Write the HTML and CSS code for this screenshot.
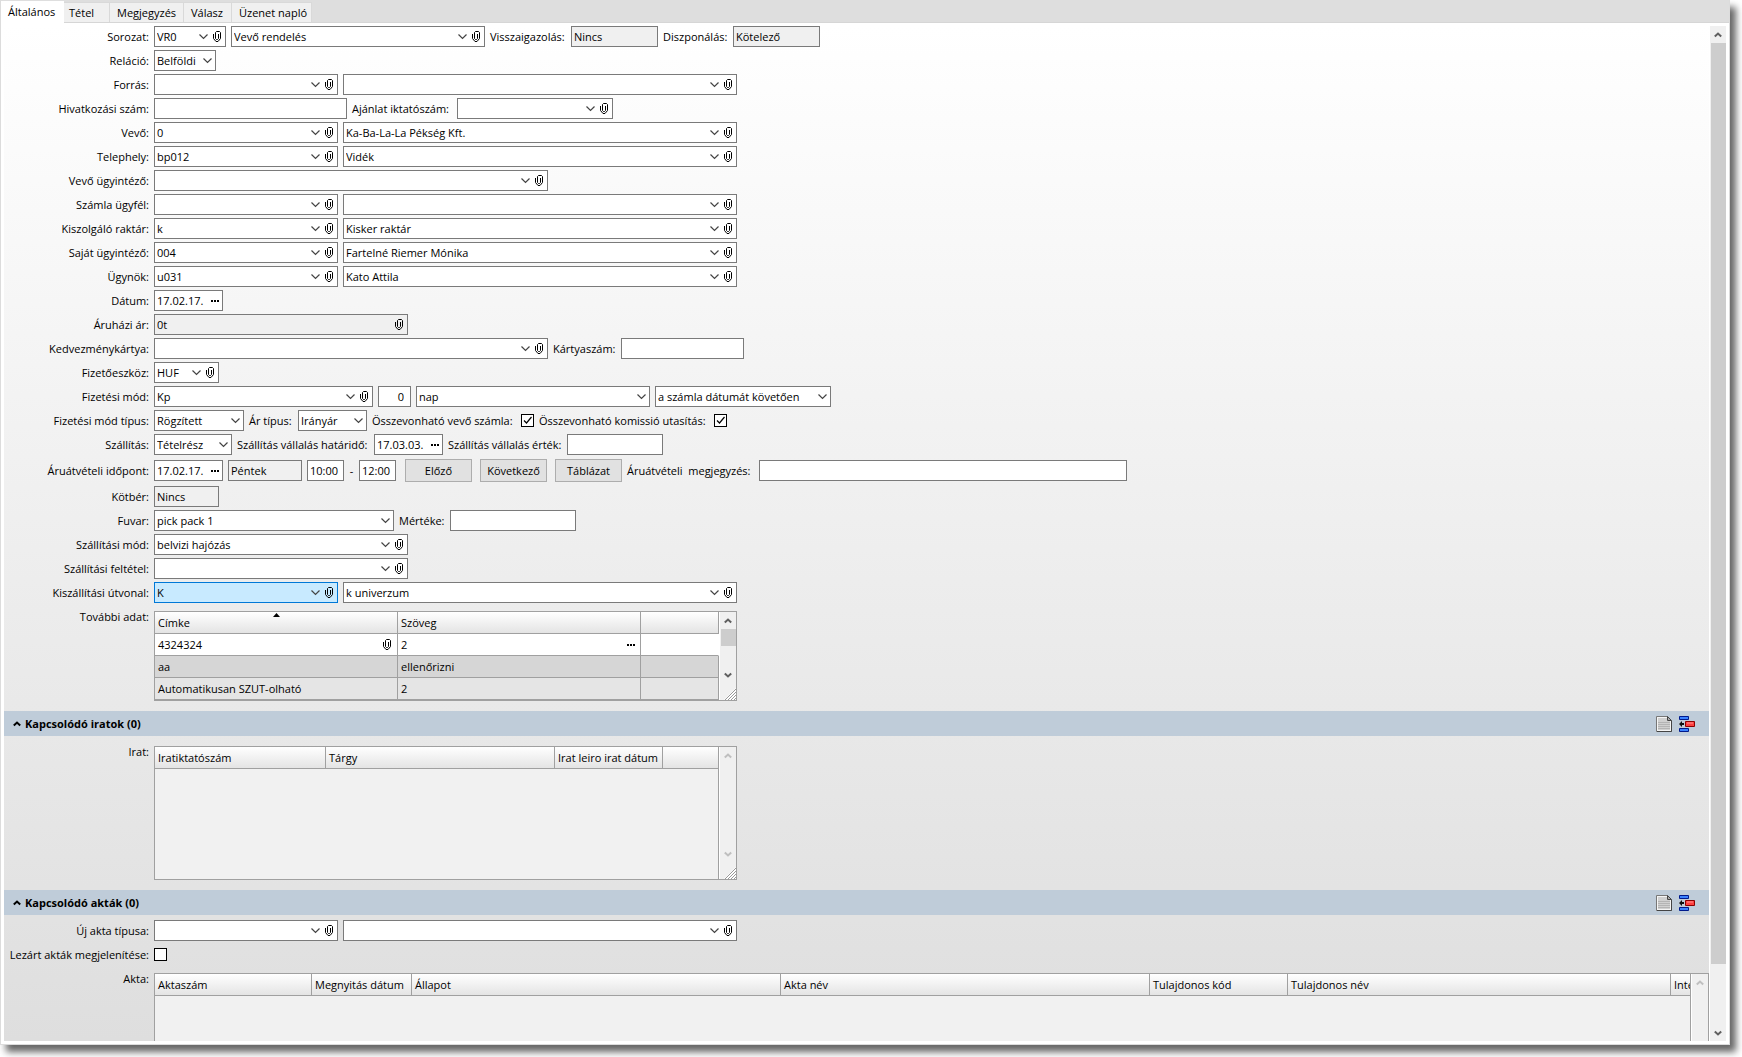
FILE: index.html
```html
<!DOCTYPE html>
<html lang="hu">
<head>
    <meta charset="UTF-8">
    <meta name="viewport" content="width=device-width, initial-scale=1.0">
    <title>Vevő rendelés</title>
    <link rel="stylesheet" href="styles.css">
</head>
<body>
    <svg class="symbols" aria-hidden="true">
        <symbol id="clip" viewBox="0 0 9 11">
            <path d="M.5 3v4.500l2.500 3h2l2.500-3v-6l-1-1h-3l-1 1v6l1 1h1l1-1V3" fill="none" stroke="#000"/>
        </symbol>
        <symbol id="dots" viewBox="0 0 8 2">
            <path d="M0 0h2v2H0zM3 0h2v2H3zM6 0h2v2H6z"/>
        </symbol>
        <symbol id="up" viewBox="0 0 8 6">
            <path d="M.8 4.500 4 1.500l3.200 3" fill="none" stroke="currentColor" stroke-width="2"/>
        </symbol>
        <symbol id="down" viewBox="0 0 8 6">
            <path d="M.8 1.500 4 4.500l3.200-3" fill="none" stroke="currentColor" stroke-width="2"/>
        </symbol>
        <symbol id="grip" viewBox="0 0 12 12">
            <path d="M0 12 12 0v12z" fill="#fff"/>
            <path d="M1 12 12 1M4 12l8-8M7 12l5-5M10 12l2-2" stroke="#999"/>
        </symbol>
        <symbol id="page" viewBox="0 0 16 16">
            <path d="M.5.5h11l4 4v11H.5z" fill="#f4f4f4" stroke="#777"/>
            <path d="M2 2h9v3h3v9H2z" fill="#d0d0d0"/>
            <path d="M2 6.500h12M2 8.500h12M2 10.500h12M2 12.500h12" stroke="#b4b4b4"/>
            <path d="M11.500.5v4h4z" fill="#aaa" stroke="#444"/>
            <path d="M15.500 5v10.500H1" fill="none" stroke="#444"/>
        </symbol>
        <symbol id="insert" viewBox="0 0 16 16">
            <path d="M.5.5h9v3h-9zM.5 12.500h9v3h-9z" fill="#3b82ff" stroke="#001a8c"/>
            <path d="M6.500 5.500h9v5h-9z" fill="#ff4040" stroke="#8c0000"/>
            <path d="M8 7h6" stroke="#ff9090"/>
            <path d="M0 8l3-3v2h2v2H3v2z" fill="#111"/>
        </symbol>
    </svg>

    <div class="window">
        <nav class="tabs">
            <button class="tab tab-general active">Általános</button>
            <button class="tab tab-item">Tétel</button>
            <button class="tab tab-note">Megjegyzés</button>
            <button class="tab tab-reply">Válasz</button>
            <button class="tab tab-log">Üzenet napló</button>
        </nav>

        <div class="pane">
            <form class="content">
                <div class="row">
                    <label class="name" for="sorozat">Sorozat:</label>
                    <div class="field w72"><select id="sorozat"><option>VR0</option></select><button type="button" class="icon"><svg class="clip"><use href="#clip"/></svg></button></div>
                    <div class="field w254"><select aria-label="Sorozat neve"><option>Vevő rendelés</option></select><button type="button" class="icon"><svg class="clip"><use href="#clip"/></svg></button></div>
                    <label class="w76" for="visszaig">Visszaigazolás:</label>
                    <div class="field readonly w87"><input id="visszaig" value="Nincs" readonly></div>
                    <label class="w65" for="diszp">Diszponálás:</label>
                    <div class="field readonly w87"><input id="diszp" value="Kötelező" readonly></div>
                </div>
                <div class="row">
                    <label class="name" for="relacio">Reláció:</label>
                    <div class="field w62"><select id="relacio"><option>Belföldi</option></select></div>
                </div>
                <div class="row">
                    <label class="name" for="forras">Forrás:</label>
                    <div class="field w184"><select id="forras"><option></option></select><button type="button" class="icon"><svg class="clip"><use href="#clip"/></svg></button></div>
                    <div class="field w394"><select aria-label="Forrás neve"><option></option></select><button type="button" class="icon"><svg class="clip"><use href="#clip"/></svg></button></div>
                </div>
                <div class="row">
                    <label class="name" for="hivszam">Hivatkozási szám:</label>
                    <div class="field w193"><input id="hivszam"></div>
                    <label class="w100" for="ajanlat">Ajánlat iktatószám:</label>
                    <div class="field w156"><select id="ajanlat"><option></option></select><button type="button" class="icon"><svg class="clip"><use href="#clip"/></svg></button></div>
                </div>
                <div class="row">
                    <label class="name" for="vevo">Vevő:</label>
                    <div class="field w184"><select id="vevo"><option>0</option></select><button type="button" class="icon"><svg class="clip"><use href="#clip"/></svg></button></div>
                    <div class="field w394"><select aria-label="Vevő neve"><option>Ka-Ba-La-La Pékség Kft.</option></select><button type="button" class="icon"><svg class="clip"><use href="#clip"/></svg></button></div>
                </div>
                <div class="row">
                    <label class="name" for="telephely">Telephely:</label>
                    <div class="field w184"><select id="telephely"><option>bp012</option></select><button type="button" class="icon"><svg class="clip"><use href="#clip"/></svg></button></div>
                    <div class="field w394"><select aria-label="Telephely neve"><option>Vidék</option></select><button type="button" class="icon"><svg class="clip"><use href="#clip"/></svg></button></div>
                </div>
                <div class="row">
                    <label class="name" for="vevougy">Vevő ügyintéző:</label>
                    <div class="field w394"><select id="vevougy"><option></option></select><button type="button" class="icon"><svg class="clip"><use href="#clip"/></svg></button></div>
                </div>
                <div class="row">
                    <label class="name" for="szamlaugy">Számla ügyfél:</label>
                    <div class="field w184"><select id="szamlaugy"><option></option></select><button type="button" class="icon"><svg class="clip"><use href="#clip"/></svg></button></div>
                    <div class="field w394"><select aria-label="Számla ügyfél neve"><option></option></select><button type="button" class="icon"><svg class="clip"><use href="#clip"/></svg></button></div>
                </div>
                <div class="row">
                    <label class="name" for="raktar">Kiszolgáló raktár:</label>
                    <div class="field w184"><select id="raktar"><option>k</option></select><button type="button" class="icon"><svg class="clip"><use href="#clip"/></svg></button></div>
                    <div class="field w394"><select aria-label="Raktár neve"><option>Kisker raktár</option></select><button type="button" class="icon"><svg class="clip"><use href="#clip"/></svg></button></div>
                </div>
                <div class="row">
                    <label class="name" for="sajatugy">Saját ügyintéző:</label>
                    <div class="field w184"><select id="sajatugy"><option>004</option></select><button type="button" class="icon"><svg class="clip"><use href="#clip"/></svg></button></div>
                    <div class="field w394"><select aria-label="Saját ügyintéző neve"><option>Fartelné Riemer Mónika</option></select><button type="button" class="icon"><svg class="clip"><use href="#clip"/></svg></button></div>
                </div>
                <div class="row">
                    <label class="name" for="ugynok">Ügynök:</label>
                    <div class="field w184"><select id="ugynok"><option>u031</option></select><button type="button" class="icon"><svg class="clip"><use href="#clip"/></svg></button></div>
                    <div class="field w394"><select aria-label="Ügynök neve"><option>Kato Attila</option></select><button type="button" class="icon"><svg class="clip"><use href="#clip"/></svg></button></div>
                </div>
                <div class="row">
                    <label class="name" for="datum">Dátum:</label>
                    <div class="field w69"><input id="datum" value="17.02.17."><button type="button" class="icon"><svg class="dots"><use href="#dots"/></svg></button></div>
                </div>
                <div class="row">
                    <label class="name" for="aruhazi">Áruházi ár:</label>
                    <div class="field readonly w254"><input id="aruhazi" value="0t" readonly><button type="button" class="icon"><svg class="clip"><use href="#clip"/></svg></button></div>
                </div>
                <div class="row">
                    <label class="name" for="kedvkartya">Kedvezménykártya:</label>
                    <div class="field w394"><select id="kedvkartya"><option></option></select><button type="button" class="icon"><svg class="clip"><use href="#clip"/></svg></button></div>
                    <label class="w63" for="kartyaszam">Kártyaszám:</label>
                    <div class="field w123"><input id="kartyaszam"></div>
                </div>
                <div class="row">
                    <label class="name" for="fizeszkoz">Fizetőeszköz:</label>
                    <div class="field w65"><select id="fizeszkoz"><option>HUF</option></select><button type="button" class="icon"><svg class="clip"><use href="#clip"/></svg></button></div>
                </div>
                <div class="row">
                    <label class="name" for="fizmod">Fizetési mód:</label>
                    <div class="field w219"><select id="fizmod"><option>Kp</option></select><button type="button" class="icon"><svg class="clip"><use href="#clip"/></svg></button></div>
                    <div class="field w33"><input class="number" aria-label="Napok száma" value="0"></div>
                    <div class="field w234"><select aria-label="Egység"><option>nap</option></select></div>
                    <div class="field w176"><select aria-label="Kezdete"><option>a számla dátumát követően</option></select></div>
                </div>
                <div class="row">
                    <label class="name" for="fiztipus">Fizetési mód típus:</label>
                    <div class="field w90"><select id="fiztipus"><option>Rögzített</option></select></div>
                    <label class="w44" for="artipus">Ár típus:</label>
                    <div class="field w69"><select id="artipus"><option>Irányár</option></select></div>
                    <label class="w144" for="vevoszamla">Összevonható vevő számla:</label>
                    <input type="checkbox" id="vevoszamla" checked>
                    <label class="w170" for="komissio">Összevonható komissió utasítás:</label>
                    <input type="checkbox" id="komissio" checked>
                </div>
                <div class="row">
                    <label class="name" for="szallitas">Szállítás:</label>
                    <div class="field w78"><select id="szallitas"><option>Tételrész</option></select></div>
                    <label class="w132" for="hatarido">Szállítás vállalás határidő:</label>
                    <div class="field w69"><input id="hatarido" value="17.03.03."><button type="button" class="icon"><svg class="dots"><use href="#dots"/></svg></button></div>
                    <label class="w114" for="ertek">Szállítás vállalás érték:</label>
                    <div class="field w96"><input id="ertek"></div>
                </div>
                <div class="row row-tall">
                    <label class="name" for="idopont">Áruátvételi időpont:</label>
                    <div class="field w69"><input id="idopont" value="17.02.17."><button type="button" class="icon"><svg class="dots"><use href="#dots"/></svg></button></div>
                    <div class="field readonly w74"><input aria-label="Nap" value="Péntek" readonly></div>
                    <div class="field w37"><input aria-label="Kezdés" value="10:00"></div>
                    <span class="dash">-</span>
                    <div class="field w37"><input aria-label="Vége" value="12:00"></div>
                    <div class="buttons">
                        <button type="button">Előző</button>
                        <button type="button">Következő</button>
                        <button type="button">Táblázat</button>
                    </div>
                    <label class="w127" for="megjegyzes">Áruátvételi &nbsp;megjegyzés:</label>
                    <div class="field w368"><input id="megjegyzes"></div>
                </div>
                <div class="row">
                    <label class="name" for="kotber">Kötbér:</label>
                    <div class="field readonly w65"><input id="kotber" value="Nincs" readonly></div>
                </div>
                <div class="row">
                    <label class="name" for="fuvar">Fuvar:</label>
                    <div class="field w240"><select id="fuvar"><option>pick pack 1</option></select></div>
                    <label class="w46" for="merteke">Mértéke:</label>
                    <div class="field w126"><input id="merteke"></div>
                </div>
                <div class="row">
                    <label class="name" for="szallmod">Szállítási mód:</label>
                    <div class="field w254"><select id="szallmod"><option>belvizi hajózás</option></select><button type="button" class="icon"><svg class="clip"><use href="#clip"/></svg></button></div>
                </div>
                <div class="row">
                    <label class="name" for="szallfelt">Szállítási feltétel:</label>
                    <div class="field w254"><select id="szallfelt"><option></option></select><button type="button" class="icon"><svg class="clip"><use href="#clip"/></svg></button></div>
                </div>
                <div class="row">
                    <label class="name" for="utvonal">Kiszállítási útvonal:</label>
                    <div class="field focused w184"><select id="utvonal"><option>K</option></select><button type="button" class="icon"><svg class="clip"><use href="#clip"/></svg></button></div>
                    <div class="field w394"><select aria-label="Útvonal neve"><option>k univerzum</option></select><button type="button" class="icon"><svg class="clip"><use href="#clip"/></svg></button></div>
                </div>
                <div class="row row-grid">
                    <span class="name" id="tovabbi">További adat:</span>
                    <div class="grid w583">
                        <table class="data" aria-labelledby="tovabbi">
                            <thead>
                                <tr><th class="w243 sorted">Címke</th><th class="w243">Szöveg</th><th></th></tr>
                            </thead>
                            <tbody>
                                <tr class="editing">
                                    <td><div class="cell">4324324<svg class="clip"><use href="#clip"/></svg></div></td>
                                    <td><div class="cell">2<svg class="dots"><use href="#dots"/></svg></div></td>
                                    <td></td>
                                </tr>
                                <tr class="dark"><td>aa</td><td>ellenőrizni</td><td></td></tr>
                                <tr><td>Automatikusan SZUT-olható</td><td>2</td><td></td></tr>
                            </tbody>
                        </table>
                        <div class="scroll">
                            <svg class="arrow"><use href="#up"/></svg>
                            <div class="thumb thumb-small"></div>
                            <svg class="arrow arrow-end"><use href="#down"/></svg>
                            <svg class="grip"><use href="#grip"/></svg>
                        </div>
                    </div>
                </div>

                <div class="section">
                    <button type="button" class="fold"><svg class="arrow"><use href="#up"/></svg>Kapcsolódó iratok (0)</button>
                    <button type="button" class="tool" aria-label="Új irat"><svg><use href="#page"/></svg></button>
                    <button type="button" class="tool" aria-label="Irat csatolása"><svg><use href="#insert"/></svg></button>
                </div>
                <div class="row row-grid">
                    <span class="name" id="irat">Irat:</span>
                    <div class="grid grid-docs w583">
                        <table class="data" aria-labelledby="irat">
                            <thead>
                                <tr><th class="w171">Iratiktatószám</th><th class="w229">Tárgy</th><th class="w108">Irat leiro irat dátum</th><th></th></tr>
                            </thead>
                        </table>
                        <div class="scroll disabled">
                            <svg class="arrow"><use href="#up"/></svg>
                            <svg class="arrow arrow-end"><use href="#down"/></svg>
                            <svg class="grip"><use href="#grip"/></svg>
                        </div>
                    </div>
                </div>

                <div class="section">
                    <button type="button" class="fold"><svg class="arrow"><use href="#up"/></svg>Kapcsolódó akták (0)</button>
                    <button type="button" class="tool" aria-label="Új akta"><svg><use href="#page"/></svg></button>
                    <button type="button" class="tool" aria-label="Akta csatolása"><svg><use href="#insert"/></svg></button>
                </div>
                <div class="row">
                    <label class="name" for="aktatipus">Új akta típusa:</label>
                    <div class="field w184"><select id="aktatipus"><option></option></select><button type="button" class="icon"><svg class="clip"><use href="#clip"/></svg></button></div>
                    <div class="field w394"><select aria-label="Akta típus neve"><option></option></select><button type="button" class="icon"><svg class="clip"><use href="#clip"/></svg></button></div>
                </div>
                <div class="row">
                    <label class="name" for="lezart">Lezárt akták megjelenítése:</label>
                    <input type="checkbox" id="lezart">
                </div>
                <div class="row row-grid row-last">
                    <span class="name" id="akta">Akta:</span>
                    <div class="grid grid-files">
                        <table class="data" aria-labelledby="akta">
                            <thead>
                                <tr><th class="w157">Aktaszám</th><th class="w100">Megnyitás dátum</th><th>Állapot</th><th>Akta név</th><th class="w138">Tulajdonos kód</th><th class="w383">Tulajdonos név</th><th class="w20">Inte</th></tr>
                            </thead>
                        </table>
                        <div class="scroll disabled">
                            <svg class="arrow"><use href="#up"/></svg>
                        </div>
                    </div>
                </div>
            </form>

            <div class="scroll scroll-main">
                <svg class="arrow"><use href="#up"/></svg>
                <div class="thumb"></div>
                <svg class="arrow arrow-end"><use href="#down"/></svg>
            </div>
        </div>
    </div>
</body>
</html>
```

FILE: styles.css
```css
* {
    box-sizing: border-box;
}

body {
    margin: 0;
    height: 100vh;
    padding: 0 12px 12px 0;
    overflow: hidden;
    background: #fff;
    font-family: "Open Sans", "Noto Sans", sans-serif;
    font-size: 11px;
    line-height: 15px;
    color: #000;
}

input, select, button {
    font: inherit;
    color: inherit;
}

.symbols {
    display: none;
}

.window {
    display: flex;
    flex-direction: column;
    height: 100%;
    background: #fff;
    border: 1px solid #dcdcdc;
    border-top: 0;
    box-shadow: 6px 7px 7px rgba(0, 0, 0, 0.6);
}

/* tabs */
.tabs {
    display: flex;
    align-items: flex-end;
    height: 23px;
    flex-shrink: 0;
    background: #dedede;
    border-bottom: 1px solid #d6d6d6;
}

.tab {
    height: 20px;
    padding: 0 0 0 5px;
    border: 1px solid #d9d9d9;
    border-left: 0;
    border-bottom: 0;
    background: #f0f0f0;
    text-align: left;
}

.tab.active {
    height: 22px;
    margin-bottom: -1px;
    padding: 0 0 3px 7px;
    background: #fff;
    border-color: #fff;
}

.tab-general { width: 63px; }
.tab-item { width: 46px; }
.tab-note { width: 74px; padding-left: 7px; }
.tab-reply { width: 48px; padding-left: 7px; }
.tab-log { width: 80px; padding-left: 7px; }

/* pane */
.pane {
    display: flex;
    flex: 1;
    min-height: 0;
    padding: 3px;
}

.content {
    display: flex;
    flex-direction: column;
    flex: 1;
    min-width: 0;
    overflow: hidden;
    background: linear-gradient(#fff, #dedede);
}

.row {
    display: flex;
    align-items: center;
    flex-shrink: 0;
    gap: 5px;
    height: 21px;
    margin-bottom: 3px;
}

.row label {
    flex-shrink: 0;
    white-space: nowrap;
}

.row .name {
    width: 145px;
    flex-shrink: 0;
    text-align: right;
    line-height: 21px;
}

.row-tall {
    height: 25px;
}

.row-grid {
    align-items: flex-start;
    height: auto;
    margin-bottom: 0;
}

.row-last {
    flex: 1;
    min-height: 0;
    align-items: stretch;
}

/* fields */
.field {
    display: flex;
    align-items: center;
    flex-shrink: 0;
    height: 21px;
    border: 1px solid #7a7a7a;
    background-color: #fff;
}

.field input,
.field select {
    flex: 1;
    min-width: 0;
    width: 100%;
    height: 19px;
    padding: 0 0 0 2px;
    border: 0;
    outline: 0;
    background: transparent;
    border-radius: 0;
}

.field select {
    appearance: none;
    background: url("data:image/svg+xml,%3Csvg xmlns='http://www.w3.org/2000/svg' width='9' height='6'%3E%3Cpath d='M.5 .5l4 4 4-4' fill='none' stroke='%23444' stroke-width='1.200'/%3E%3C/svg%3E") no-repeat right 2px center;
}

.field select:last-child {
    background-position: right 3px center;
}

.field .number {
    padding-right: 6px;
    text-align: right;
}

.field.readonly {
    background-color: #f0f0f0;
}

.field.focused {
    border-color: #0078d7;
    background-color: #c8eaff;
}

.icon {
    display: flex;
    align-items: center;
    justify-content: center;
    width: 15px;
    height: 19px;
    padding: 0;
    border: 0;
    background: transparent;
}

.clip {
    width: 9px;
    height: 11px;
}

.dots {
    width: 8px;
    height: 2px;
}

input[type="checkbox"] {
    appearance: none;
    width: 13px;
    height: 13px;
    margin: 0;
    border: 1px solid #000;
    background: #fff;
}

input[type="checkbox"]:checked {
    background: #fff url("data:image/svg+xml,%3Csvg xmlns='http://www.w3.org/2000/svg' width='11' height='11'%3E%3Cpath d='M2 5.500l2.500 2.500 5-6' fill='none' stroke='%23000' stroke-width='1.200'/%3E%3C/svg%3E");
}

.dash {
    width: 5px;
    text-align: center;
}

.buttons {
    display: flex;
    gap: 8px;
    margin-left: 4px;
}

.buttons button {
    width: 67px;
    height: 23px;
    padding: 0;
    border: 1px solid #adadad;
    background: #e1e1e1;
}

/* data grids */
.grid {
    display: flex;
    margin-top: 5px;
    border: 1px solid #a0a0a0;
    background: #f1f1f1;
}

.grid-docs {
    height: 134px;
}

.grid-files {
    flex: 1;
    min-width: 0;
    border-bottom: 0;
}

.data {
    flex: 1;
    min-width: 0;
    width: 100%;
    table-layout: fixed;
    border-collapse: separate;
    border-spacing: 0;
    align-self: flex-start;
}

.data th,
.data td {
    height: 22px;
    padding: 0 0 0 3px;
    border-right: 1px solid #a0a0a0;
    border-bottom: 1px solid #a0a0a0;
    font-weight: normal;
    text-align: left;
    white-space: nowrap;
    overflow: hidden;
}

.data th {
    background: linear-gradient(#fff, #e4e4e4);
}

.data td {
    background: #e5e5e5;
}

.data .dark td {
    background: #d6d6d6;
}

.data .editing td {
    background: #fff;
}

.data .editing td:last-child {
    border-right-color: #fff;
}

.data .sorted {
    background: url("data:image/svg+xml,%3Csvg xmlns='http://www.w3.org/2000/svg' width='7' height='4'%3E%3Cpath d='M0 4l3.500-4L7 4z'/%3E%3C/svg%3E") no-repeat center 1px, linear-gradient(#fff, #e4e4e4);
}

.cell {
    display: flex;
    align-items: center;
    justify-content: space-between;
    padding-right: 5px;
}

/* scrollbars */
.scroll {
    display: flex;
    flex-direction: column;
    align-items: center;
    width: 17px;
    flex-shrink: 0;
    border-left: 1px solid #fff;
    background: #f0f0f0;
    color: #606060;
}

.scroll.disabled {
    color: #bfbfbf;
}

/* the lines of the files grid run on below its header */
.grid-files .scroll,
.grid-docs .scroll {
    box-shadow: -1px 0 #a0a0a0;
}

.arrow {
    width: 8px;
    height: 6px;
    margin: 6px 0 5px;
    flex-shrink: 0;
}

.arrow-end {
    margin-top: auto;
}

.thumb {
    width: 15px;
    height: calc(100% - 94px);
    background: #cdcdcd;
}

.thumb-small {
    height: 17px;
}

.grip {
    width: 12px;
    height: 12px;
    margin-top: 5px;
    align-self: flex-end;
    flex-shrink: 0;
}

/* section bars */
.section {
    display: flex;
    align-items: center;
    flex-shrink: 0;
    height: 25px;
    margin: 10px 0 5px;
    padding-right: 14px;
    background: #bfccd9;
}

.fold {
    display: flex;
    align-items: center;
    gap: 4px;
    margin-right: auto;
    padding: 0 0 0 9px;
    border: 0;
    background: none;
    font-weight: bold;
}

.tool {
    width: 16px;
    height: 16px;
    margin-left: 7px;
    padding: 0;
    border: 0;
    background: none;
}

.tool svg {
    display: block;
    width: 16px;
    height: 16px;
}

/* widths */
.w20 { width: 20px; }
.w33 { width: 33px; }
.w37 { width: 37px; }
.w44 { width: 44px; }
.w46 { width: 46px; }
.w62 { width: 62px; }
.w63 { width: 63px; }
.w65 { width: 65px; }
.w69 { width: 69px; }
.w72 { width: 72px; }
.w74 { width: 74px; }
.w76 { width: 76px; }
.w78 { width: 78px; }
.w87 { width: 87px; }
.w90 { width: 90px; }
.w96 { width: 96px; }
.w100 { width: 100px; }
.w108 { width: 108px; }
.w114 { width: 114px; }
.w123 { width: 123px; }
.w126 { width: 126px; }
.w127 { width: 127px; }
.w132 { width: 132px; }
.w138 { width: 138px; }
.w144 { width: 144px; }
.w156 { width: 156px; }
.w157 { width: 157px; }
.w170 { width: 170px; }
.w171 { width: 171px; }
.w176 { width: 176px; }
.w184 { width: 184px; }
.w193 { width: 193px; }
.w219 { width: 219px; }
.w229 { width: 229px; }
.w234 { width: 234px; }
.w240 { width: 240px; }
.w243 { width: 243px; }
.w254 { width: 254px; }
.w368 { width: 368px; }
.w383 { width: 383px; }
.w394 { width: 394px; }
.w583 { width: 583px; }
```
